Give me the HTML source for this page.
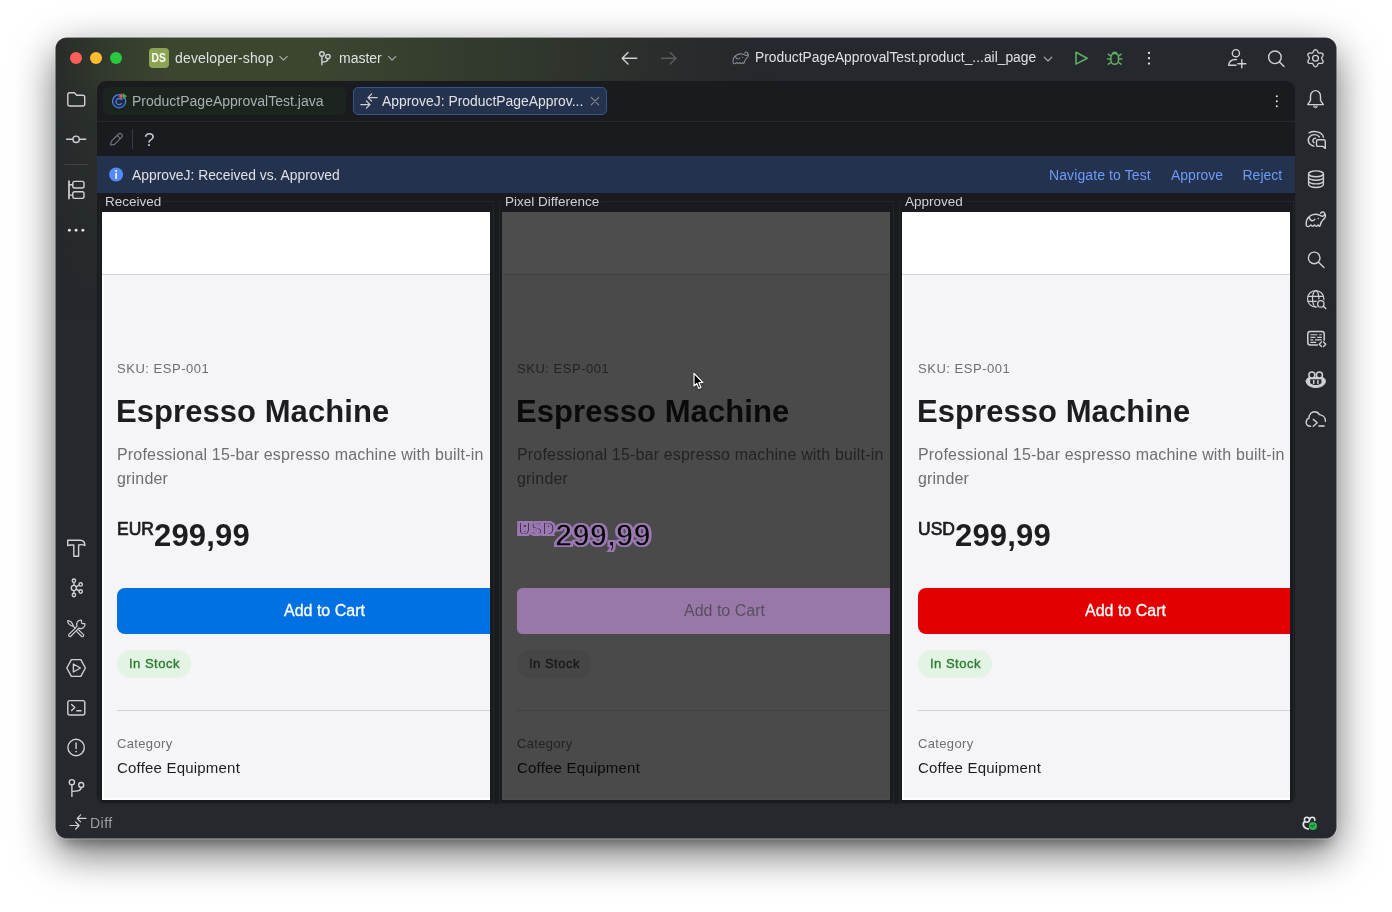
<!DOCTYPE html>
<html><head><meta charset="utf-8">
<style>
*{box-sizing:border-box;margin:0;padding:0}
html,body{width:1392px;height:912px;overflow:hidden;background:#fff;font-family:"Liberation Sans",sans-serif;}
#win{will-change:transform;position:absolute;left:56px;top:38px;width:1280px;height:800px;border-radius:11px;background:#25282c;overflow:hidden;
 box-shadow:0 0 0 .6px #44474b,0 0 0 1.4px rgba(255,255,255,.3),0 14.7px 41.5px 0 rgba(0,0,0,.6),0 9.7px 12.4px -6px rgba(0,0,0,.31);}
#grad{position:absolute;left:0;top:0;width:720px;height:290px;
 background:linear-gradient(to right,rgb(40,44,42) 0,rgb(52,60,45) 60px,rgb(60,70,47) 120px,rgb(60,70,47) 250px,rgb(55,63,46) 350px,rgb(47,53,44) 500px,rgb(41,45,44) 610px,rgb(37,40,44) 710px);
 -webkit-mask-image:linear-gradient(to bottom,#000 0,#000 40px,rgba(0,0,0,.6) 70px,rgba(0,0,0,.4) 130px,rgba(0,0,0,.2) 200px,transparent 280px);mask-image:linear-gradient(to bottom,#000 0,#000 40px,rgba(0,0,0,.6) 70px,rgba(0,0,0,.4) 130px,rgba(0,0,0,.2) 200px,transparent 280px);}
.abs{position:absolute}
.t{position:absolute;white-space:nowrap;color:#dfe1e5;font-size:13px;line-height:16px}
#editor{position:absolute;left:41px;top:43px;width:1198px;height:723px;background:#1a1b1f;border-radius:9px;overflow:hidden}
.dot{position:absolute;top:14px;width:12px;height:12px;border-radius:50%}
.tab{position:absolute;top:6px;height:28px;border-radius:6px}
.panel{position:absolute;top:131px;width:388px;height:588px;overflow:hidden;background:#f5f5f7}
.panel .hdr{position:absolute;left:0;top:0;width:100%;height:63px;background:#fff;border-bottom:1px solid #d2d2d7}
.pt{position:absolute;white-space:nowrap;left:15px}
.frame{position:absolute;top:120px;height:603px;border:1px solid #212428}
.flabel{position:absolute;top:113px;font-size:13.5px;line-height:16px;color:#ced0d6;background:#1a1b1f;padding:0 2px;white-space:nowrap}

.sku{top:149px;font-size:13px;color:#6e6e73;letter-spacing:.53px}
.ttl{top:181px;margin-left:-1px;font-size:31px;font-weight:bold;color:#1d1d1f;line-height:38px;letter-spacing:.06px}
.desc{top:231px;font-size:16px;letter-spacing:.18px;color:#6e6e73;line-height:24px;white-space:normal!important;width:380px}
.price{top:298px;font-size:31px;letter-spacing:.2px;font-weight:bold;color:#1d1d1f;line-height:38px}
.cur{font-size:17.5px;vertical-align:10.5px;letter-spacing:0}
.btn{position:absolute;left:15px;top:376px;width:400px;height:46px;border-radius:8px}
.btxt{left:182px!important;top:389px;font-size:16px;color:#fff;line-height:20px}
.badge{position:absolute;left:15px;top:438px;width:74px;height:28px;border-radius:14px;background:#e3f3e4}
.bdg{left:27px!important;top:444px;font-size:13px;font-weight:bold;color:#2e7d32;line-height:16px}
.hr{position:absolute;left:15px;top:498px;width:400px;height:1px;background:#d2d2d7}
.cat{top:524px;font-size:13px;letter-spacing:.35px;color:#6e6e73;line-height:16px}
.cof{top:546px;font-size:15px;letter-spacing:.2px;color:#1d1d1f;line-height:20px}
.nxt{top:585.5px;font-size:13px;color:#6e6e73;line-height:16px}
.panel:after{content:"";box-sizing:border-box;position:absolute;left:0;top:63px;bottom:0;width:100%;border-left:2px solid #fff;border-bottom:2px solid #fff}
.diff:after{border-color:#4d4d4d}
.rec .cur,.app .cur{font-weight:normal;-webkit-text-stroke:.7px #1d1d1f}
.rec .bdg,.app .bdg{font-weight:normal;-webkit-text-stroke:.4px #2e7d32;letter-spacing:.5px}
.rec .btxt,.app .btxt{-webkit-text-stroke:.3px #fff}
.diff .bdg{font-weight:normal;-webkit-text-stroke:.4px #1a1a1a;letter-spacing:.5px}
.app .pt{margin-left:1px}.app .ttl{margin-left:0}.app .btn,.app .badge,.app .hr{margin-left:1px}
.diff{background:#4a4a4a}.diff .btn{border-radius:5.5px}
.diff .hdr{background:#4d4d4d;border-bottom-color:#414141}
.diff .sku,.diff .desc,.diff .cat,.diff .nxt{color:#232324}
.diff .ttl,.diff .cof{color:#0a0a0a}
.diff .btxt{color:#57505c}
.diff .badge{background:#464646}
.diff .bdg{color:#1a1a1a}
.diff .hr{background:#404040}
.diff .pp{color:#9b79b3;-webkit-text-stroke:2px #9b79b3}
.diff .pk{color:#0a0a0a;-webkit-text-stroke:1.5px #9b79b3}
.diff .ck{-webkit-text-stroke:1.9px #9b79b3}
</style></head><body>
<div id="win">
 <div id="grad"></div>
 <!-- traffic lights -->
 <div class="dot" style="left:14px;background:#fe5f57"></div>
 <div class="dot" style="left:34px;background:#febc2e"></div>
 <div class="dot" style="left:54px;background:#28c840"></div>
 <!-- project -->
 <div class="abs" style="left:93px;top:10px;width:20px;height:20px;border-radius:4px;background:#8da452;color:#fff;font-size:12.5px;font-weight:bold;line-height:20px;text-align:center"><span style="display:inline-block;transform:scaleX(.82)">DS</span></div>
 <div class="t" style="left:119px;top:12px;font-size:14px;letter-spacing:.16px">developer-shop</div>
 <div class="t" style="left:283px;top:12px;font-size:14px">master</div>
 <div class="t" style="left:699px;top:12px;font-size:13.8px;letter-spacing:.01px">ProductPageApprovalTest.product_...ail_page</div>

 <div id="editor">
  <!-- tabs -->
  <div class="tab" style="left:6px;width:243px;background:#1b241d"></div>
  <div class="t" style="left:35px;top:12px;font-size:14px;color:#abaeb5">ProductPageApprovalTest.java</div>
  <div class="tab" style="left:256px;width:254px;background:#25324d;border:1px solid #35538f;border-radius:5px"></div>
  <div class="t" style="left:285px;top:12px;font-size:13.9px;color:#dfe1e5">ApproveJ: ProductPageApprov...</div>
  <div class="abs" style="left:0;top:40px;width:100%;height:1px;background:#26282c"></div>
  <div class="t" style="left:47px;top:48.5px;font-size:19px;line-height:20px;color:#c3c6cc">?</div>
  <!-- banner -->
  <div class="abs" style="left:0;top:75px;width:100%;height:37px;background:#25324d"></div>
  <div class="t" style="left:35px;top:85.5px;font-size:13.85px;color:#dfe1e5">ApproveJ: Received vs. Approved</div>
  <div class="t" style="left:952px;top:85.5px;font-size:14px;letter-spacing:.1px;color:#6b9bfa">Navigate to Test</div>
  <div class="t" style="left:1074px;top:85.5px;font-size:14px;color:#6b9bfa">Approve</div>
  <div class="t" style="left:1145.5px;top:85.5px;font-size:14px;color:#6b9bfa">Reject</div>

  <!-- frames -->
  <div class="frame" style="left:2px;width:395px"></div>
  <div class="frame" style="left:402px;width:395px"></div>
  <div class="frame" style="left:802px;width:395px"></div>
  <div class="flabel" style="left:6px">Received</div>
  <div class="flabel" style="left:406px">Pixel Difference</div>
  <div class="flabel" style="left:806px">Approved</div>

  <!-- Received -->
  <div class="panel rec" style="left:5px">
   <div class="hdr"></div>
   <div class="pt sku">SKU: ESP-001</div>
   <div class="pt ttl">Espresso Machine</div>
   <div class="pt desc">Professional 15-bar espresso machine with built-in grinder</div>
   <div class="pt price"><span class="cur">EUR</span>299,99</div>
   <div class="btn" style="background:#0071e3"></div>
   <div class="pt btxt">Add to Cart</div>
   <div class="badge"></div>
   <div class="pt bdg">In Stock</div>
   <div class="hr"></div>
   <div class="pt cat">Category</div>
   <div class="pt cof">Coffee Equipment</div>
   <div class="pt nxt">Weight</div>
  </div>
  <!-- Diff -->
  <div class="panel diff" style="left:405px">
   <div class="hdr"></div>
   <div class="pt sku">SKU: ESP-001</div>
   <div class="pt ttl">Espresso Machine</div>
   <div class="pt desc">Professional 15-bar espresso machine with built-in grinder</div>
   <div class="pt price pp" style="left:15px"><span class="cur">EUR</span>299,99</div>
   <div class="pt price pp" style="left:17px"><span class="cur">USD</span>299,99</div>
   <div class="pt price pk" style="left:16px"><span class="cur ck">USD</span>299,99</div>
   <div class="btn" style="background:#9977a9"></div>
   <div class="pt btxt">Add to Cart</div>
   <div class="badge"></div>
   <div class="pt bdg">In Stock</div>
   <div class="hr"></div>
   <div class="pt cat">Category</div>
   <div class="pt cof">Coffee Equipment</div>
   <div class="pt nxt">Weight</div>
  </div>
  <!-- Approved -->
  <div class="panel app" style="left:805px">
   <div class="hdr"></div>
   <div class="pt sku">SKU: ESP-001</div>
   <div class="pt ttl">Espresso Machine</div>
   <div class="pt desc">Professional 15-bar espresso machine with built-in grinder</div>
   <div class="pt price"><span class="cur">USD</span>299,99</div>
   <div class="btn" style="background:#e30000"></div>
   <div class="pt btxt">Add to Cart</div>
   <div class="badge"></div>
   <div class="pt bdg">In Stock</div>
   <div class="hr"></div>
   <div class="pt cat">Category</div>
   <div class="pt cof">Coffee Equipment</div>
   <div class="pt nxt">Weight</div>
  </div>
 </div>

 <svg id="ico" class="abs" style="left:0;top:0" width="1280" height="800" viewBox="56 38 1280 800" fill="none" stroke="#ced0d6" stroke-width="1.4" stroke-linecap="round" stroke-linejoin="round">
  <!-- title bar -->
  <g stroke="#a6a9b0" stroke-width="1.2">
   <polyline points="279.8,56.4 283.5,60.1 287.2,56.4"/>
   <polyline points="388.4,56.4 392.1,60.1 395.8,56.4"/>
   <polyline points="1044.2,57.2 1048,61 1051.8,57.2"/>
  </g>
  <g id="branch"><circle cx="321.9" cy="54" r="2.300"/><circle cx="327.900" cy="56.600" r="2.200"/><path d="M321.900 56.400V64.800M327.900 58.900C327.900 61.400 326 62 321.900 62"/></g>
  <path d="M622.2 58.2H636.8M628 52.4L622.2 58.2L628 64"/>
  <path d="M661.5 58.2H676M670.2 52.4L676 58.2L670.2 64" stroke="#5a5d63"/>
  <g id="eleS" stroke="#868a91" stroke-width="1.3" transform="translate(-311.92 -117.52) scale(.8)"><path d="M1306.4 225.800C1305.800 222 1306.800 218.600 1309.300 216.600C1311.500 214.600 1314.500 213.800 1317.500 214.500C1319.500 215 1321 216.200 1322.600 216.300C1324 216.300 1324.800 215 1324.600 213.500C1324.400 212.200 1323 211.600 1321.800 212.200C1321 212.600 1320.700 213.300 1320.700 213.400M1324.600 213.500C1326 215 1325.800 217.500 1323.200 219.600C1321.400 221.200 1320.600 223 1320 225.900Q1319.300 226.800 1318.200 224.900Q1316.400 227.700 1314.500 224.900Q1312.700 227.700 1310.800 224.900Q1308.600 227.800 1306.400 225.800M1309.300 216.600C1309.500 219 1310.500 220.600 1312.500 220.700C1313.800 220.700 1314.600 220 1314.900 219.300"/><circle cx="1318.300" cy="218.500" r=".8" fill="#868a91" stroke="none"/></g>
  <path d="M1076 52.3V64.1L1087.2 58.2Z" stroke="#5fad65" stroke-width="1.6"/>
  <g stroke="#5fad65" stroke-width="1.5"><path d="M1110.9 57.2A3.8 3.8 0 0 1 1118.5 57.2V60.3A3.8 4 0 0 1 1110.9 60.3ZM1112.2 54.2A2.6 2.6 0 0 1 1117.2 54.2M1110.9 59H1107.6M1118.5 59H1121.8M1111 56.2L1108.2 54.2M1118.4 56.2L1121.2 54.2M1111.4 62L1108.4 64.2M1118 62L1121 64.2"/></g>
  <g fill="#dfe1e5" stroke="none"><circle cx="1149" cy="52.9" r="1.15"/><circle cx="1149" cy="58.2" r="1.15"/><circle cx="1149" cy="63.6" r="1.15"/>
   <circle cx="1276.8" cy="96.3" r="1"/><circle cx="1276.8" cy="101.2" r="1"/><circle cx="1276.8" cy="106.2" r="1"/>
   <circle cx="69.4" cy="230.2" r="1.45"/><circle cx="76.1" cy="230.2" r="1.45"/><circle cx="82.9" cy="230.2" r="1.45"/></g>
  <g id="adduser"><circle cx="1235.9" cy="53.2" r="3.6"/><path d="M1236.5 59.6C1232 59.2 1229.2 61.8 1228.6 65.2H1236M1241.8 59.8V67.8M1237.8 63.8H1245.8"/></g>
  <g id="search1"><circle cx="1274.9" cy="57.3" r="6.3"/><path d="M1279.5 62L1284 66.6"/></g>
  <g id="gear" transform="translate(1315.5 58.2)" stroke-width="1.35"><circle r="2.9"/><path d="M0.00 -8.60L0.73 -8.40L1.38 -7.85L1.90 -7.10L2.30 -6.32L2.65 -5.68L3.05 -5.28L3.59 -5.13L4.32 -5.15L5.20 -5.20L6.11 -5.13L6.91 -4.84L7.45 -4.30L7.64 -3.56L7.49 -2.73L7.10 -1.90L6.62 -1.17L6.24 -0.55L6.10 -0.00L6.24 0.55L6.62 1.17L7.10 1.90L7.49 2.73L7.64 3.56L7.45 4.30L6.91 4.84L6.11 5.13L5.20 5.20L4.32 5.15L3.59 5.13L3.05 5.28L2.65 5.68L2.30 6.32L1.90 7.10L1.38 7.85L0.73 8.40L0.00 8.60L-0.73 8.40L-1.38 7.85L-1.90 7.10L-2.30 6.32L-2.65 5.68L-3.05 5.28L-3.59 5.13L-4.32 5.15L-5.20 5.20L-6.11 5.13L-6.91 4.84L-7.45 4.30L-7.64 3.56L-7.49 2.73L-7.10 1.90L-6.62 1.17L-6.24 0.55L-6.10 0.00L-6.24 -0.55L-6.62 -1.17L-7.10 -1.90L-7.49 -2.73L-7.64 -3.56L-7.45 -4.30L-6.91 -4.84L-6.11 -5.13L-5.20 -5.20L-4.32 -5.15L-3.59 -5.13L-3.05 -5.28L-2.65 -5.68L-2.30 -6.32L-1.90 -7.10L-1.38 -7.85L-0.73 -8.40Z"/></g>
  <!-- right bar -->
  <g id="bell"><path d="M1310.500 96.200A5 5.600 0 0 1 1320.500 96.200V100.400L1323.300 104.600H1307.700L1310.500 100.400Z"/><path d="M1313.500 106.400A2.100 2.100 0 0 0 1317.500 106.400Z" fill="#ced0d6" stroke-width=".6"/></g>
  <g id="ai"><path d="M1309 132.800C1313.500 130.400 1322 131.400 1323.400 137.200M1319.400 137C1317.500 134.200 1312.500 133.600 1309.600 136.800C1307 139.800 1308 144.600 1313.800 146.200M1315.600 138.200C1313 138.400 1311.800 140.800 1313.900 142.600M1318 139.700H1323.800A1.500 1.500 0 0 1 1325.300 141.200V148.400L1322.800 146.400H1318A1.500 1.500 0 0 1 1316.500 144.900V141.200A1.500 1.500 0 0 1 1318 139.700Z"/></g>
  <g id="db"><ellipse cx="1316" cy="173.800" rx="7.400" ry="2.900"/><path d="M1308.600 173.800V184.600C1308.600 186.200 1312 187.500 1316 187.500C1320 187.500 1323.400 186.200 1323.400 184.600V173.800M1308.600 177.400C1308.600 179 1312 180.300 1316 180.300C1320 180.300 1323.400 179 1323.400 177.400M1308.600 181C1308.600 182.600 1312 183.900 1316 183.900C1320 183.900 1323.400 182.600 1323.400 181"/></g>
  <g id="eleB"><path d="M1306.4 225.800C1305.800 222 1306.800 218.600 1309.300 216.600C1311.500 214.600 1314.500 213.800 1317.500 214.500C1319.500 215 1321 216.200 1322.600 216.300C1324 216.300 1324.800 215 1324.600 213.500C1324.400 212.200 1323 211.600 1321.800 212.200C1321 212.600 1320.700 213.300 1320.700 213.400M1324.600 213.500C1326 215 1325.800 217.500 1323.200 219.600C1321.400 221.200 1320.600 223 1320 225.900Q1319.300 226.800 1318.200 224.900Q1316.400 227.700 1314.500 224.900Q1312.700 227.700 1310.800 224.900Q1308.600 227.800 1306.400 225.800M1309.300 216.600C1309.500 219 1310.500 220.600 1312.500 220.700C1313.800 220.700 1314.600 220 1314.900 219.300"/><circle cx="1318.300" cy="218.500" r=".8" fill="#ced0d6" stroke="none"/></g>
  <g id="search2"><circle cx="1314.200" cy="257.900" r="5.800"/><path d="M1318.500 262.300L1324 267.400"/></g>
  <g id="globe" stroke-width="1.200"><circle cx="1315.7" cy="298.800" r="8.200"/><ellipse cx="1315.700" cy="298.800" rx="3.200" ry="8.200"/><path d="M1308 296.300H1323.400M1308 301.300H1323.400"/><circle cx="1320.800" cy="303.900" r="4.900" fill="#25282c" stroke="none"/><path d="M1323 306.300L1327.500 310.300" stroke="#25282c" stroke-width="3.600"/><circle cx="1320.800" cy="303.900" r="3.200" stroke-width="1.300"/><path d="M1323.200 306.300L1325.800 308.600" stroke-width="1.400"/></g>
  <g id="endp"><path d="M1317.400 345.100H1310.300A2.500 2.500 0 0 1 1307.800 342.600V334.100A2.500 2.500 0 0 1 1310.300 331.600H1321.700A2.500 2.500 0 0 1 1324.200 334.100V340.200" stroke-width="1.500"/><path d="M1310.400 334.800H1317.400M1319.200 334.800H1321.800M1310.400 337.400H1315.400M1317.200 337.400H1321.800M1310.400 339.900H1313.200M1315 339.900H1321.800M1310.400 342.400H1316.200" stroke-width="1.100" stroke-linecap="butt"/><path d="M1321.500 342L1319.200 344.200L1321.500 346.400M1323.500 342L1325.800 344.200L1323.500 346.400" stroke-width="1.400"/></g>
  <g id="copilot"><path d="M1306.200 381.200C1306.200 379.400 1307.400 378.200 1308.800 377.400H1322.800C1324.200 378.200 1325.400 379.400 1325.400 381.200C1325.400 385 1320.800 387.500 1315.800 387.500C1310.800 387.500 1306.200 385 1306.200 381.200Z" fill="#ced0d6" stroke-width="1"/><path d="M1310.200 379.300H1321.400V383.200C1319.500 384.600 1317.600 385 1315.800 385C1314 385 1312.100 384.600 1310.200 383.200Z" fill="#25282c" stroke="none"/><path d="M1313.700 380.600V383.400M1317.900 380.600V383.400" stroke-width="1.500"/><circle cx="1311.900" cy="374.900" r="3" stroke-width="1.500" fill="#25282c"/><circle cx="1319.400" cy="374.900" r="3" stroke-width="1.500" fill="#25282c"/></g>
  <g id="cloud"><path d="M1310.600 426.200C1307.800 426.200 1306.200 424.400 1306.200 422.200C1306.200 420.200 1307.400 418.800 1309 418.200C1308.800 414.600 1311.400 411.700 1314.600 411.700C1316.800 411.700 1318.400 412.800 1319.400 414.600C1322.800 415 1325.600 417.600 1325.400 421.400M1313.300 419.400L1317.200 422.800L1313.300 426.200"/><path d="M1318.400 426H1324.600" stroke-width="1.600" stroke-linecap="butt"/></g>
  <!-- left bar -->
  <g id="folder"><path d="M67.800 104.200V94.500A1.800 1.800 0 0 1 69.600 92.700H74.300L76.700 95.200H82.900A1.800 1.800 0 0 1 84.700 97V104.200A1.800 1.800 0 0 1 82.900 106H69.600A1.800 1.800 0 0 1 67.800 104.200Z" stroke-width="1.400"/></g>
  <g id="commit"><circle cx="76.100" cy="139.300" r="3.200"/><path d="M66.600 139.300H72.900M79.300 139.300H85.700"/></g>
  <path d="M64.500 164.500H87.700" stroke="#3f4246" stroke-width="1"/>
  <g id="struct"><path d="M69 181.200V198.600" stroke-width="1.700"/><path d="M69 184.700H72.600M69 195.100H72.600"/><rect x="72.800" y="181.400" width="11.200" height="6.600" rx="1.800"/><rect x="72.800" y="191.800" width="11.200" height="6.600" rx="1.800"/></g>
  <g id="hammer"><path d="M67.7 540.200H80.200C83.200 540.200 84.900 542.600 84.900 545.600C83.600 544.300 81.400 544.400 78.600 545V556.200H73.800V545H70.200L67.700 545.600Z"/></g>
  <g id="graph"><circle cx="73.9" cy="588" r="2.600"/><circle cx="73.900" cy="580.700" r="1.700"/><circle cx="73.900" cy="595" r="1.700"/><circle cx="80.700" cy="584.400" r="1.700"/><circle cx="80.700" cy="591.500" r="1.700"/><path d="M73.900 582.400V585.400M73.900 590.600V593.300M76.200 586.800L79.200 585.200M76.200 589.200L79.200 590.800"/></g>
  <g id="tools" stroke-width="1.2"><path d="M84.940 623.670A4.200 4.200 0 0 1 78.890 628.140L70.760 636.270A1.300 1.300 0 0 1 68.930 634.440L77.060 626.310A4.200 4.200 0 0 1 81.530 620.260L81.600 622.700Q81.700 623.700 82.700 623.700Z"/><path d="M67.700 620.700Q71.800 620.700 73.500 626.500Q67.700 624.800 67.700 620.700ZM73.500 626.500L75 628M78.600 629.800L83.500 634.700A1.300 1.300 0 0 1 81.700 636.500L76.800 631.600"/></g>
  <g id="services"><path d="M66.800 668L71.400 659.600H80.800L85.400 668L80.800 676.400H71.400ZM73.400 664V672L80.400 668Z"/></g>
  <g id="term"><rect x="67.800" y="700.600" width="17" height="14.400" rx="2"/><path d="M71.600 704.600L74.800 707.600L71.600 710.600M76.800 710.800H81"/></g>
  <g id="prob"><circle cx="76.100" cy="747.500" r="8.200"/><path d="M76.100 743V748.600"/><circle cx="76.100" cy="751.600" r=".9" fill="#ced0d6" stroke="none"/></g>
  <g id="git2"><circle cx="71.9" cy="782.200" r="2.600"/><circle cx="81.200" cy="785" r="2.500"/><path d="M71.900 784.800V796.400M81.200 787.500C81.200 790.800 78 791.400 71.900 791.400"/></g>
  <g id="diffb" stroke="#ced0d6" stroke-width="1.2"><path d="M77.2 818.300H86M80.600 814.800L77.200 818.300L80.600 821.800M70 825.500H79M75.600 822L79.100 825.500L75.600 829"/></g>
  <!-- editor icons -->
  <g id="diffe" stroke="#ced0d6" stroke-width="1.2"><path d="M368 97.600H377.200M371.600 94L368 97.600L371.600 101.200M360.800 104.600H370M366.400 101L370 104.600L366.400 108.200"/></g>
  <path d="M591.300 97.400L598.700 104.800M598.700 97.400L591.300 104.800" stroke="#868a91" stroke-width="1.100"/>
  <g id="pencil" stroke="#6f737a" stroke-width="1.200"><path d="M110.600 145L111.400 141.200L118.600 134C119.400 133.200 120.600 133.200 121.400 134L121.800 134.400C122.600 135.200 122.600 136.400 121.800 137.200L114.600 144.400ZM117.200 135.400L120.400 138.600"/></g>
  <path d="M132.500 129.500V148.500" stroke="#393b40" stroke-width="1"/>
  <g id="info"><circle cx="116.100" cy="174.500" r="7" fill="#548af7" stroke="none"/><path d="M116.100 173.600V178.200" stroke="#fff" stroke-width="1.600"/><circle cx="116.100" cy="170.900" r="1" fill="#fff" stroke="none"/></g>
  <g id="cls"><circle cx="119.1" cy="101.200" r="6.600" stroke="#4b7fe0" stroke-width="1.300" fill="#1f2a42"/><path d="M121.500 99.600A3.100 3.100 0 1 0 121.500 103.600" stroke="#4b7fe0" stroke-width="1.300"/><path d="M118.600 96.300L122.200 92.900V99.200Z" fill="#db5c5c" stroke="none"/><path d="M122.900 92.900V99.200L127 96.300Z" fill="#5a9e5c" stroke="none"/></g>
  <g id="copst" stroke="#e4e5e9"><circle cx="1306.9" cy="819.700" r="2.500" stroke-width="1.500"/><path d="M1309.800 819.700A2.500 2.500 0 0 1 1314.800 819.700V820.600" stroke-width="1.500"/><path d="M1304.200 822C1302.600 823.400 1303.200 826.600 1305 827.800C1306 828.500 1307 828.800 1308.200 828.900" stroke-width="1.900"/><circle cx="1312.900" cy="826" r="4.700" fill="#25282c" stroke="none"/><circle cx="1312.900" cy="826" r="4.100" fill="#2bb24c" stroke="none"/><path d="M1311 825.500L1312.400 826.700L1314.500 824.600" stroke="#1d6b31" stroke-width="1.100"/></g>
  <path id="cursor" d="M694 373.400V386L696.800 383.500L698.800 388.400L700.900 387.500L698.900 382.700L702.800 382.500Z" fill="#000" stroke="#fff" stroke-width="1.200" stroke-linejoin="round" style="filter:drop-shadow(0 1px 1px rgba(0,0,0,.45))"/>
 </svg>
 <div class="t" style="left:34px;top:776.5px;font-size:14px;letter-spacing:.5px;color:#9da0a8">Diff</div>
</div>
</body></html>
